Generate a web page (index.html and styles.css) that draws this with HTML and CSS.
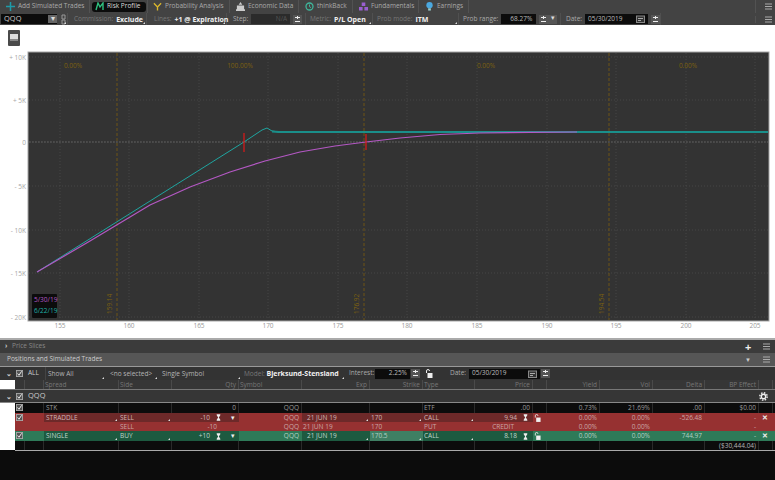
FILE: index.html
```html
<!DOCTYPE html>
<html lang="en">
<head>
<meta charset="utf-8">
<title>Risk Profile</title>
<link rel="stylesheet" href="styles.css">
</head>
<body>
<svg class="defs" width="0" height="0" aria-hidden="true">
  <symbol id="check" viewBox="0 0 8 8"><rect x=".5" y=".5" width="7" height="7" fill="#555" stroke="#aaa"/><path d="M1.8 4l1.6 2 3-4.5" fill="none" stroke="#eee" stroke-width="1.1"/></symbol>
  <symbol id="spin" viewBox="0 0 9 9"><rect width="9" height="9" fill="#555"/><path d="M2 2.5h5M4.500 1v3M2 6.500h5" stroke="#eee" stroke-width="1"/></symbol>
  <symbol id="menu" viewBox="0 0 7 7"><path d="M0 1h7M0 3.500h7M0 6h7" stroke="#aaa" stroke-width="1"/></symbol>
  <symbol id="lock" viewBox="0 0 8 9"><path d="M1.500 4V2a1.500 1.500 0 0 1 3 0" fill="none" stroke="#eee"/><rect x="2.500" y="4" width="5" height="5" fill="#eee"/></symbol>
  <symbol id="cal" viewBox="0 0 9 8"><rect x=".5" y="1" width="8" height="6.500" fill="#333" stroke="#888"/><path d="M2 3.500h5M2 5.500h3" stroke="#aaa"/></symbol>
  <symbol id="hour" viewBox="0 0 7 9"><path d="M1 0h5v1.500L4 4.500l2 3V9H1V7.500l2-3-2-3z" fill="#eee"/></symbol>
</svg>

<header class="tabs">
  <div class="tab w-add"><svg class="ic" viewBox="0 0 9 9"><path d="M4.500 0v9M0 4.500h9" stroke="#1f9aa8" stroke-width="1.500"/></svg>Add Simulated Trades</div>
  <div class="tab w-risk"><span class="pill"><svg class="ic" viewBox="0 0 9 9"><path d="M1 8l2-7 2 4 3-4v7" fill="none" stroke="#2fbf7f" stroke-width="1.400"/></svg>Risk Profile</span></div>
  <div class="tab w-prob"><svg class="ic" viewBox="0 0 10 9"><path d="M5 9V5L1 1M5 5l4-4" fill="none" stroke="#d9b62c" stroke-width="1.500"/></svg>Probability Analysis</div>
  <div class="tab w-econ"><svg class="ic" viewBox="0 0 10 10"><path d="M5 0l2 3H3zM1 4h8v4H1zM0 8h10v2H0z" fill="#ccc"/></svg>Economic Data</div>
  <div class="tab w-back"><svg class="ic" viewBox="0 0 9 9"><circle cx="4.500" cy="4.500" r="3.500" fill="none" stroke="#3fb59b" stroke-width="1.300"/><path d="M4.500 2.500v2.200l1.500 1" fill="none" stroke="#3fb59b"/></svg>thinkBack</div>
  <div class="tab w-fund"><svg class="ic" viewBox="0 0 10 9"><path d="M3 0h4v4H3zM0 5h4v4H0zM6 5h4v4H6z" fill="#9a5fd0"/></svg>Fundamentals</div>
  <div class="tab w-earn"><svg class="ic" viewBox="0 0 8 10"><circle cx="4" cy="3.500" r="3.500" fill="#4aa8e0"/><path d="M2.500 7h3v2.500h-3z" fill="#9cc"/></svg>Earnings</div>
  <div class="tab-end"><svg class="mn"><use href="#menu"/></svg></div>
</header>

<div class="opts">
  <div class="sym"><span class="sym-v">QQQ</span><span class="sym-d">▾</span></div>
  <div class="opt w-link dd"><svg class="link" viewBox="0 0 5 11"><path d="M1 1h3v4H1zM1 6h3v4H1z" fill="none" stroke="#999"/></svg></div>
  <div class="opt w-comm dd">Commission: <b>Exclude</b></div>
  <div class="opt w-lines dd">Lines: <b>+1 @ Expiration</b></div>
  <div class="opt w-step"><span class="lab">Step:</span><span class="inp dim w-i1">N/A</span><svg class="sp"><use href="#spin"/></svg></div>
  <div class="opt w-metric dd">Metric: <b>P/L Open</b></div>
  <div class="opt w-mode dd">Prob mode: <b>ITM</b></div>
  <div class="opt w-range"><span class="lab">Prob range:</span><span class="inp w-i2">68.27%</span><svg class="sp"><use href="#spin"/></svg><span class="sd">▾</span></div>
  <div class="opt w-date"><span class="lab">Date:</span><span class="inp left w-i3">05/30/2019<svg class="calic"><use href="#cal"/></svg></span><svg class="sp"><use href="#spin"/></svg></div>
  <div class="tab-end"><svg class="mn"><use href="#menu"/></svg></div>
</div>

<main class="white">
  <div class="tool"><span class="toolbtn"><span class="toolbtn-in"></span></span></div>
  <svg class="chart" viewBox="0 51 775 287" width="775" height="287">
    <rect x="28" y="52" width="741" height="269" fill="#333" stroke="#a5a5a5"/>
    <g class="grid">
      <path d="M29 57H768M29 100H768M29 142H768M29 186H768M29 230H768M29 273H768M29 317H768"/>
      <path d="M60 53V320M129 53V320M199 53V320M268 53V320M338 53V320M407 53V320M477 53V320M547 53V320M616 53V320M686 53V320M755 53V320"/>
    </g>
    <path class="zero" d="M29 142H768"/>
    <path class="dash" d="M117 53V320M364 53V320M609 53V320"/>
    <g class="pct">
      <text x="73" y="68">0.00%</text><text x="240" y="68">100.00%</text>
      <text x="486" y="68">0.00%</text><text x="688" y="68">0.00%</text>
    </g>
    <g class="pct rot">
      <text transform="translate(112 314) rotate(-90)">159.14</text>
      <text transform="translate(359 314) rotate(-90)">176.92</text>
      <text transform="translate(604 314) rotate(-90)">194.54</text>
    </g>
    <g class="ylab">
      <text x="26" y="60">+ 10K</text><text x="26" y="103">+ 5K</text><text x="26" y="145">0</text>
      <text x="26" y="189">- 5K</text><text x="26" y="233">- 10K</text><text x="26" y="276">- 15K</text><text x="26" y="320">- 20K</text>
    </g>
    <g class="xlab">
      <text x="60" y="328">155</text><text x="129" y="328">160</text><text x="199" y="328">165</text><text x="268" y="328">170</text>
      <text x="338" y="328">175</text><text x="407" y="328">180</text><text x="477" y="328">185</text><text x="547" y="328">190</text>
      <text x="616" y="328">195</text><text x="686" y="328">200</text><text x="755" y="328">205</text>
    </g>
    <path class="teal" d="M37 272L244 142 262 130 267 128 272 131 279 132"/>
    <path class="teal thick" d="M272 131.500L279 132H768"/>
    <path class="purple" d="M37 272L90 241 120 223 150 205 190 187 230 172 265 161 300 152 335 146 366 142 400 138 440 134.500 480 133 530 132.300 577 132"/>
    <path class="red" d="M244 133V152M366 134V150"/>
    <rect x="32" y="294" width="25" height="24" rx="1" fill="#0c0c0c"/>
    <text class="lg-p" x="34" y="302">5/30/19</text>
    <text class="lg-t" x="34" y="313">6/22/19</text>
  </svg>
</main>

<section class="dark">
  <div class="slices"><span class="car">›</span>Price Slices<span class="bar-r"><span class="plus">+</span><svg class="mn"><use href="#menu"/></svg></span></div>
  <div class="pos">Positions and Simulated Trades<span class="bar-r"><span class="tri-d">▼</span><svg class="mn"><use href="#menu"/></svg></span></div>
  <div class="ctl">
    <span class="c-a"><span class="chev">⌄</span><svg class="cb"><use href="#check"/></svg><span>ALL</span></span>
    <span class="c-b dd">Show All</span>
    <span class="c-c dd">&lt;no selected&gt;</span>
    <span class="c-d dd">Single Symbol</span>
    <span class="c-e dd"><i>Model:</i> <b>Bjerksund-Stensland</b></span>
    <span class="c-f">Interest:</span>
    <span class="inp c-g">2.25%</span><svg class="sp"><use href="#spin"/></svg><svg class="lk"><use href="#lock"/></svg>
    <span class="c-h">Date:</span>
    <span class="inp left c-i">05/30/2019<svg class="calic"><use href="#cal"/></svg></span><svg class="sp"><use href="#spin"/></svg>
  </div>
  <div class="row head">
    <span></span><span></span><span></span><span>Spread</span><span>Side</span><span class="r">Qty</span><span>Symbol</span>
    <span class="r">Exp</span><span class="r">Strike</span><span>Type</span><span class="r">Price</span><span></span>
    <span class="r">Yield</span><span class="r">Vol</span><span class="r">Delta</span><span class="r">BP Effect</span><span></span>
  </div>
  <div class="grp"><span class="chev">⌄</span><svg class="cb"><use href="#check"/></svg><span>QQQ</span><svg class="gear" viewBox="0 0 9 9"><circle cx="4.500" cy="4.500" r="2.200" fill="none" stroke="#eee" stroke-width="1.400"/><circle cx="4.500" cy="4.500" r="3.700" fill="none" stroke="#eee" stroke-width="1.400" stroke-dasharray="1.500 1.400"/></svg></div>
  <div class="row stk">
    <span class="w"></span><svg class="cb"><use href="#check"/></svg><span></span><span class="sp-c">STK</span><span></span><span class="r">0</span><span class="r">QQQ</span>
    <span></span><span></span><span>ETF</span><span class="r">.00</span><span></span>
    <span class="r">0.73%</span><span class="r">21.69%</span><span class="r">.00</span><span class="r">$0.00</span><span></span>
  </div>
  <div class="row red-r">
    <span class="w"></span><svg class="cb"><use href="#check"/></svg><span></span><span class="ds dd sp-c">STRADDLE</span><span class="ds dd">SELL</span><span class="ds r qty">-10<svg class="hg"><use href="#hour"/></svg><span class="dn">▾</span></span><span class="r">QQQ</span>
    <span class="ds dd ctr">21 JUN 19</span><span class="ds dd">170</span><span class="ds dd">CALL</span><span class="ds r prc">9.94<svg class="hg"><use href="#hour"/></svg></span><span class="ico"><svg class="lk"><use href="#lock"/></svg></span>
    <span class="r">0.00%</span><span class="r">0.00%</span><span class="r">-526.48</span><span class="r">-</span><span class="x">✕</span>
  </div>
  <div class="row red-l">
    <span class="w"></span><span></span><span></span><span></span><span>SELL</span><span class="r qty2">-10</span><span class="r">QQQ</span>
    <span>21 JUN 19</span><span>170</span><span>PUT</span><span class="r qty3">CREDIT</span><span></span>
    <span class="r">0.00%</span><span class="r">0.00%</span><span></span><span class="r">-</span><span></span>
  </div>
  <div class="row grn-r">
    <span class="w"></span><svg class="cb"><use href="#check"/></svg><span></span><span class="ds dd sp-c">SINGLE</span><span class="ds dd">BUY</span><span class="ds r qty">+10<svg class="hg"><use href="#hour"/></svg><span class="dn">▾</span></span><span class="r">QQQ</span>
    <span class="ds dd ctr">21 JUN 19</span><span class="ds2 dd">170.5</span><span class="ds dd">CALL</span><span class="ds r prc">8.18<svg class="hg"><use href="#hour"/></svg></span><span class="ico"><svg class="lk"><use href="#lock"/></svg></span>
    <span class="r">0.00%</span><span class="r">0.00%</span><span class="r">744.97</span><span class="r">-</span><span class="x">✕</span>
  </div>
  <div class="row tot">
    <span class="w"></span><span></span><span></span><span></span><span></span><span></span><span></span>
    <span></span><span></span><span></span><span></span><span></span>
    <span></span><span></span><span></span><span class="r">($30,444.04)</span><span></span>
  </div>
  <div class="rule"></div>
</section>
</body>
</html>
```

FILE: styles.css
```css
* { box-sizing: border-box; }
html, body { margin: 0; padding: 0; }
body {
  width: 775px; height: 480px; overflow: hidden; background: #0c0c0c;
  font: 6.500px/1 "Open Sans", "Liberation Sans", sans-serif; color: #b5b5b5;
}
svg { display: block; flex: none; }
.defs { position: absolute; }
b { color: #f0f0f0; font-weight: 700; }
i { font-style: normal; color: #777; }

.tabs { display: flex; height: 13px; background: #434343; }
.tab { display: flex; align-items: center; gap: 3px; padding-left: 6px; border-right: 1px solid #525252; white-space: nowrap; color: #aaa; }
.ic { width: 9px; height: 9px; }
.w-add { width: 90px; }
.w-risk { width: 58px; padding-left: 2px; }
.pill { display: flex; align-items: center; gap: 3px; width: 54px; height: 10px; padding-left: 3px; border-radius: 3px; background: #0c0c0c; color: #ddd; }
.w-prob { width: 82px; padding-left: 5px; }
.w-econ { width: 69px; }
.w-back { width: 54px; }
.w-fund { width: 66px; }
.w-earn { width: 50px; gap: 3px; }
.tab-end { margin-left: auto; width: 20px; padding-left: 9px; display: flex; align-items: center; border-left: 1px solid #525252; }
.mn { width: 7px; height: 7px; }

.opts { display: flex; height: 12px; background: #434343; white-space: nowrap; align-items: center; color: #777; }
.sym { display: flex; width: 56px; height: 10px; margin-left: 1px; background: #0c0c0c; color: #ccc; align-items: center; font-size: 7.500px; }
.sym-v { flex: 1; padding-left: 3px; }
.sym-d { width: 9px; height: 8px; background: #666; color: #ddd; text-align: center; }
.opt { display: flex; align-items: center; height: 12px; gap: 3px; padding-left: 6px; border-right: 1px solid #505050; }
.opt b { font-size: 7px; }
.w-link { width: 11px; padding-left: 4px; }
.link { width: 5px; height: 11px; }
.w-comm { width: 79px; padding-left: 6px; }
.w-lines { width: 80px; padding-left: 7px; }
.w-step { width: 79px; padding-left: 6px; }
.w-metric { width: 67px; padding-left: 4px; }
.w-mode { width: 86px; padding-left: 4px; }
.w-range { width: 102px; padding-left: 4px; }
.w-date { width: 100px; padding-left: 5px; }
.lab { color: #aaa; }
.inp { display: flex; align-items: center; justify-content: flex-end; height: 10px; padding: 0 3px; background: #0c0c0c; color: #bbb; flex: none; }
.inp.left { justify-content: space-between; }
.dim { color: #555; background: #2b2b2b; }
.w-i1 { width: 39px; }
.w-i2 { width: 35px; padding-right: 4px; }
.w-i3 { width: 63px; }
.sp { width: 9px; height: 9px; flex: none; }
.sd { width: 9px; height: 9px; background: #555; color: #ddd; margin-left: -3px; text-align: center; }
.calic { width: 9px; height: 8px; }
.dd { position: relative; }
.dd::after { content: ""; position: absolute; right: 1px; bottom: 1px; border-style: solid; border-width: 0 0 2px 2px; border-color: transparent transparent #ddd transparent; }

.white { height: 313px; background: #fff; }
.tool { height: 26px; padding: 5px 0 0 8px; }
.toolbtn { display: block; width: 12px; height: 16px; background: #4a4a4a; border-radius: 1px; padding: 4px 2px; }
.toolbtn-in { display: block; height: 7px; background: #ddd; border-bottom: 2px solid #888; }
.chart { font-family: "Open Sans", "Liberation Sans", sans-serif; font-size: 6.500px; }
.grid path { fill: none; stroke: #464646; stroke-dasharray: 1 2; }
.zero { fill: none; stroke: #5a5a5a; stroke-dasharray: 2 1; }
.dash { fill: none; stroke: #6e5516; stroke-dasharray: 3 2; }
.pct text { fill: #7d6010; text-anchor: middle; }
.rot text { text-anchor: start; }
.ylab text { fill: #a8a8a8; text-anchor: end; }
.xlab text { fill: #9a9a9a; text-anchor: middle; }
.purple { fill: none; stroke: #b458c4; stroke-width: 1.200; }
.teal { fill: none; stroke: #1fa5a0; stroke-width: 1; }
.thick { stroke: #1a8f8a; stroke-width: 2; }
.red { fill: none; stroke: #e01818; stroke-width: 1.200; }
.lg-p { fill: #b458c4; }
.lg-t { fill: #20b0a8; }

.dark { background: #0c0c0c; }
.slices, .pos { position: relative; display: flex; align-items: center; white-space: nowrap; }
.slices { height: 15px; border-top: 2px solid #aaa; padding-left: 5px; background: #3b3b3b; color: #888; }
.car { width: 7px; color: #ccc; font-weight: 700; }
.pos { height: 13px; padding-left: 7px; background: #565656; color: #ccc; }
.bar-r { margin-left: auto; width: 36px; display: flex; align-items: center; justify-content: space-between; padding: 0 5px 0 6px; }
.plus { font-size: 11px; font-weight: 700; color: #eee; line-height: 7px; }
.tri-d { color: #ccc; font-size: 6px; }
.ctl { display: flex; align-items: center; height: 14px; background: #333; border-top: 1px solid #999; white-space: nowrap; }
.ctl .sp { margin-left: 1px; }
.c-a { display: flex; align-items: center; gap: 5px; width: 45px; padding-left: 6px; color: #ccc; }
.chev { width: 5px; color: #ccc; font-size: 7px; font-weight: 700; line-height: 5px; }
.cb { width: 7px; height: 7px; }
.c-b { width: 60px; height: 13px; line-height: 13px; padding-left: 2px; border-left: 1px solid #444; }
.c-c { width: 53px; height: 13px; line-height: 13px; padding-left: 5px; }
.c-d { width: 83px; height: 13px; line-height: 13px; padding-left: 4px; }
.c-e { width: 104px; height: 13px; line-height: 13px; padding-left: 3px; }
.c-e b { font-size: 7px; }
.c-f { width: 30px; padding-left: 4px; color: #aaa; }
.c-g { width: 35px; }
.lk { width: 8px; height: 9px; margin-left: 5px; }
.c-h { width: 36px; padding-left: 17px; color: #aaa; }
.c-i { width: 71px; }

.row { display: grid; height: 10px; grid-template-columns: 15px 10px 19px 75px 53px 67px 63px 68px 53px 52px 58px 14px 53px 53px 52px 54px 14px 3px; align-items: stretch; line-height: 10px; white-space: nowrap; background: #0c0c0c; }
.row > span { padding: 0 2px 0 1px; border-right: 1px solid transparent; overflow: hidden; }
.row > .sp-c { padding-left: 2px; }
.row > .ctr { padding-left: 5px; }
.row > .cb { margin: 1px 0 0 1px; }
.r { text-align: right; }
.row .w { background: #fff; padding: 0; }
.head { height: 10px; background: #363636; color: #777; border-bottom: 1px solid #777; }
.head > span { border-right-color: #4a4a4a; line-height: 9px; }
.head > span:first-child { background: #fff; border: 0; }
.grp { position: relative; display: flex; align-items: center; gap: 5px; height: 13px; padding-left: 6px; background: #363636; border-bottom: 1px solid #888; color: #ccc; font-size: 7.500px; }
.gear { margin-left: auto; margin-right: 7px; width: 9px; height: 9px; }
.stk { color: #999; }
.stk > span, .tot > span { border-right-color: #2a2a2a; }
.stk .w, .tot .w { border: 0; }
.red-r, .red-l { background: #963131; color: #c9a5a5; }
.red-r { height: 9px; line-height: 9px; }
.red-l { height: 9px; line-height: 9px; }
.red-r .ds { background: #6d2929; color: #cfb5b5; }
.grn-r { background: #2e7a58; color: #b3d0c3; }
.grn-r .ds { background: #1d5a40; color: #c0d6cc; }
.grn-r .ds2 { background: #3f7f63; }
.qty { display: flex; justify-content: flex-end; align-items: center; gap: 6px; padding-right: 0 !important; }
.prc { display: flex; justify-content: flex-end; align-items: center; gap: 6px; padding-right: 4px !important; }
.hg { width: 5px; height: 7px; }
.dn { width: 11px; text-align: center; color: #eee; }
.ico { display: flex; align-items: center; }
.ico .lk { margin: 0; width: 7px; height: 8px; }
.x { color: #eee; font-size: 7px; text-align: center; font-weight: 700; }
.qty2 { padding-right: 21px !important; }
.qty3 { padding-right: 18px !important; }
.tot { height: 9px; line-height: 9px; }
.rule { height: 1px; margin-left: 15px; background: #aaa; }
```
